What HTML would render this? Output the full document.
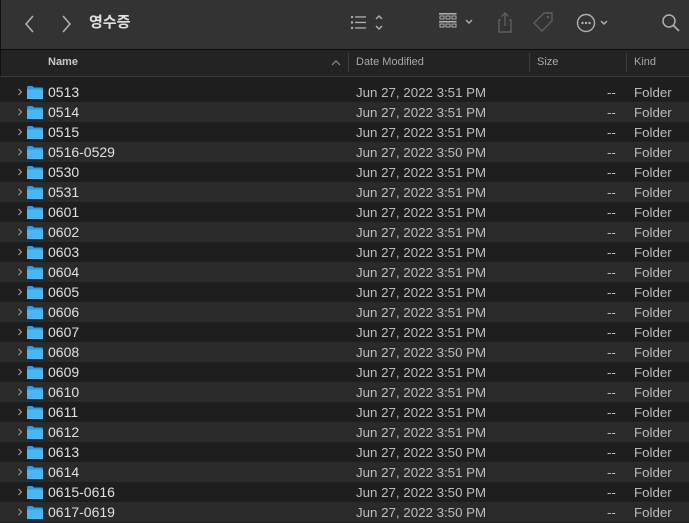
<!DOCTYPE html>
<html><head><meta charset="utf-8"><style>
*{margin:0;padding:0;box-sizing:border-box}
body{width:689px;height:523px;background:#1e1e1e;overflow:hidden;font-family:"Liberation Sans","Noto Sans CJK KR",sans-serif;position:relative}
.tb{position:absolute;left:0;top:0;width:689px;height:49px;background:#333333;border-left:1px solid #111}
.bl{position:absolute;left:0;top:49px;width:689px;height:1px;background:#0b0b0b}
.hd{position:absolute;left:0;top:50px;width:689px;height:26px;background:#232323;border-left:1px solid #111}
.hl{position:absolute;left:0;top:76px;width:689px;height:1px;background:#3a3a3a}
.ht{position:absolute;top:56px;font-size:11px;color:#a8a8a8}
.sep{position:absolute;top:53px;width:1px;height:19px;background:#3c3c3c}
.row{position:absolute;left:0;width:689px;height:20px;font-size:13.3px;color:#e0e0e0;transform:translateY(1px)}
.row.a{background:#2a2a2a}
.row span{position:absolute;top:3px}
.nm{left:48px;font-size:14px;top:2px!important}
.dt{left:356px;color:#bdbdbd}
.sz{left:607px;color:#bdbdbd}
.kd{left:634px;color:#bdbdbd}
.ch{position:absolute;left:16px;top:5px}
.fd{position:absolute;left:27px;top:4px}
</style></head><body>
<div class="tb">
<svg style="position:absolute;left:22px;top:14px" width="14" height="20"><path d="M10 2 L3 10 L10 18" fill="none" stroke="#b0b0b0" stroke-width="1.6"/></svg>
<svg style="position:absolute;left:58px;top:14px" width="14" height="20"><path d="M4 2 L11 10 L4 18" fill="none" stroke="#b0b0b0" stroke-width="1.6"/></svg>
<div style="position:absolute;left:88px;top:11px;font-size:15px;font-weight:bold;color:#e0e0e0">영수증</div>
<svg style="position:absolute;left:348px;top:13px" width="40" height="20"><g fill="#b0b0b0"><circle cx="3" cy="4" r="1.2"/><circle cx="3" cy="9.5" r="1.2"/><circle cx="3" cy="15" r="1.2"/><rect x="6" y="3.3" width="11" height="1.3"/><rect x="6" y="8.8" width="11" height="1.3"/><rect x="6" y="14.3" width="11" height="1.3"/></g><path d="M27 6 L30 3 L33 6 M27 13 L30 16 L33 13" fill="none" stroke="#b0b0b0" stroke-width="1.4"/></svg>
<svg style="position:absolute;left:438px;top:12px" width="40" height="22"><g fill="none" stroke="#b0b0b0" stroke-width="1"><rect x="0" y="1.5" width="17" height="0.5"/><rect x="1" y="4" width="4" height="3"/><rect x="7" y="4" width="4" height="3"/><rect x="13" y="4" width="4" height="3"/><rect x="0" y="9.5" width="17" height="0.5"/><rect x="1" y="12" width="4" height="3"/><rect x="7" y="12" width="4" height="3"/><rect x="13" y="12" width="4" height="3"/></g><path d="M27 8 L30 11 L33 8" fill="none" stroke="#b0b0b0" stroke-width="1.4"/></svg>
<svg style="position:absolute;left:494px;top:11px" width="20" height="24"><path d="M6 9 H4 V21 H16 V9 H14 M10 15 V2 M6.5 5.5 L10 2 L13.5 5.5" fill="none" stroke="#5e5e5e" stroke-width="1.4"/></svg>
<svg style="position:absolute;left:530px;top:11px" width="24" height="24"><path d="M13 2 H21 V10 L11 20 L3 12 Z" fill="none" stroke="#5e5e5e" stroke-width="1.4"/><circle cx="17" cy="6" r="1.3" fill="#5e5e5e"/></svg>
<svg style="position:absolute;left:575px;top:12px" width="36" height="22"><circle cx="10" cy="11" r="8.5" fill="none" stroke="#b0b0b0" stroke-width="1.4"/><g fill="#b0b0b0"><circle cx="6.5" cy="11" r="1.2"/><circle cx="10" cy="11" r="1.2"/><circle cx="13.5" cy="11" r="1.2"/></g><path d="M25 9 L28 12 L31 9" fill="none" stroke="#b0b0b0" stroke-width="1.4"/></svg>
<svg style="position:absolute;left:660px;top:13px" width="20" height="20"><circle cx="8" cy="8" r="6" fill="none" stroke="#b0b0b0" stroke-width="1.5"/><path d="M12.5 12.5 L18 18" stroke="#b0b0b0" stroke-width="1.6"/></svg>
</div>
<div class="bl"></div>
<div class="hd"></div>
<div class="hl"></div>
<div class="ht" style="left:48px;font-weight:bold;color:#c8c8c8">Name</div>
<svg style="position:absolute;left:331px;top:59px" width="10" height="8"><path d="M1 6 L5 2 L9 6" fill="none" stroke="#909090" stroke-width="1.2"/></svg>
<div class="sep" style="left:348px"></div><div class="ht" style="left:356px">Date Modified</div>
<div class="sep" style="left:529px"></div><div class="ht" style="left:537px">Size</div>
<div class="sep" style="left:626px"></div><div class="ht" style="left:634px">Kind</div>
<div class="row" style="top:81px"><svg class="ch" width="8" height="10"><path d="M2.5 2 L5.5 5 L2.5 8" fill="none" stroke="#9a9a9a" stroke-width="1.1"/></svg><svg class="fd" width="16" height="13"><path d="M0 1.5 Q0 0 1.5 0 H5.5 L7 1.5 H14.5 Q16 1.5 16 3 V13 H0 Z" fill="#2a9de8"/><rect x="0" y="3.5" width="16" height="9.5" rx="1" fill="#4ab6f5"/></svg><span class="nm">0513</span><span class="dt">Jun 27, 2022 3:51 PM</span><span class="sz">--</span><span class="kd">Folder</span></div>
<div class="row a" style="top:101px"><svg class="ch" width="8" height="10"><path d="M2.5 2 L5.5 5 L2.5 8" fill="none" stroke="#9a9a9a" stroke-width="1.1"/></svg><svg class="fd" width="16" height="13"><path d="M0 1.5 Q0 0 1.5 0 H5.5 L7 1.5 H14.5 Q16 1.5 16 3 V13 H0 Z" fill="#2a9de8"/><rect x="0" y="3.5" width="16" height="9.5" rx="1" fill="#4ab6f5"/></svg><span class="nm">0514</span><span class="dt">Jun 27, 2022 3:51 PM</span><span class="sz">--</span><span class="kd">Folder</span></div>
<div class="row" style="top:121px"><svg class="ch" width="8" height="10"><path d="M2.5 2 L5.5 5 L2.5 8" fill="none" stroke="#9a9a9a" stroke-width="1.1"/></svg><svg class="fd" width="16" height="13"><path d="M0 1.5 Q0 0 1.5 0 H5.5 L7 1.5 H14.5 Q16 1.5 16 3 V13 H0 Z" fill="#2a9de8"/><rect x="0" y="3.5" width="16" height="9.5" rx="1" fill="#4ab6f5"/></svg><span class="nm">0515</span><span class="dt">Jun 27, 2022 3:51 PM</span><span class="sz">--</span><span class="kd">Folder</span></div>
<div class="row a" style="top:141px"><svg class="ch" width="8" height="10"><path d="M2.5 2 L5.5 5 L2.5 8" fill="none" stroke="#9a9a9a" stroke-width="1.1"/></svg><svg class="fd" width="16" height="13"><path d="M0 1.5 Q0 0 1.5 0 H5.5 L7 1.5 H14.5 Q16 1.5 16 3 V13 H0 Z" fill="#2a9de8"/><rect x="0" y="3.5" width="16" height="9.5" rx="1" fill="#4ab6f5"/></svg><span class="nm">0516-0529</span><span class="dt">Jun 27, 2022 3:50 PM</span><span class="sz">--</span><span class="kd">Folder</span></div>
<div class="row" style="top:161px"><svg class="ch" width="8" height="10"><path d="M2.5 2 L5.5 5 L2.5 8" fill="none" stroke="#9a9a9a" stroke-width="1.1"/></svg><svg class="fd" width="16" height="13"><path d="M0 1.5 Q0 0 1.5 0 H5.5 L7 1.5 H14.5 Q16 1.5 16 3 V13 H0 Z" fill="#2a9de8"/><rect x="0" y="3.5" width="16" height="9.5" rx="1" fill="#4ab6f5"/></svg><span class="nm">0530</span><span class="dt">Jun 27, 2022 3:51 PM</span><span class="sz">--</span><span class="kd">Folder</span></div>
<div class="row a" style="top:181px"><svg class="ch" width="8" height="10"><path d="M2.5 2 L5.5 5 L2.5 8" fill="none" stroke="#9a9a9a" stroke-width="1.1"/></svg><svg class="fd" width="16" height="13"><path d="M0 1.5 Q0 0 1.5 0 H5.5 L7 1.5 H14.5 Q16 1.5 16 3 V13 H0 Z" fill="#2a9de8"/><rect x="0" y="3.5" width="16" height="9.5" rx="1" fill="#4ab6f5"/></svg><span class="nm">0531</span><span class="dt">Jun 27, 2022 3:51 PM</span><span class="sz">--</span><span class="kd">Folder</span></div>
<div class="row" style="top:201px"><svg class="ch" width="8" height="10"><path d="M2.5 2 L5.5 5 L2.5 8" fill="none" stroke="#9a9a9a" stroke-width="1.1"/></svg><svg class="fd" width="16" height="13"><path d="M0 1.5 Q0 0 1.5 0 H5.5 L7 1.5 H14.5 Q16 1.5 16 3 V13 H0 Z" fill="#2a9de8"/><rect x="0" y="3.5" width="16" height="9.5" rx="1" fill="#4ab6f5"/></svg><span class="nm">0601</span><span class="dt">Jun 27, 2022 3:51 PM</span><span class="sz">--</span><span class="kd">Folder</span></div>
<div class="row a" style="top:221px"><svg class="ch" width="8" height="10"><path d="M2.5 2 L5.5 5 L2.5 8" fill="none" stroke="#9a9a9a" stroke-width="1.1"/></svg><svg class="fd" width="16" height="13"><path d="M0 1.5 Q0 0 1.5 0 H5.5 L7 1.5 H14.5 Q16 1.5 16 3 V13 H0 Z" fill="#2a9de8"/><rect x="0" y="3.5" width="16" height="9.5" rx="1" fill="#4ab6f5"/></svg><span class="nm">0602</span><span class="dt">Jun 27, 2022 3:51 PM</span><span class="sz">--</span><span class="kd">Folder</span></div>
<div class="row" style="top:241px"><svg class="ch" width="8" height="10"><path d="M2.5 2 L5.5 5 L2.5 8" fill="none" stroke="#9a9a9a" stroke-width="1.1"/></svg><svg class="fd" width="16" height="13"><path d="M0 1.5 Q0 0 1.5 0 H5.5 L7 1.5 H14.5 Q16 1.5 16 3 V13 H0 Z" fill="#2a9de8"/><rect x="0" y="3.5" width="16" height="9.5" rx="1" fill="#4ab6f5"/></svg><span class="nm">0603</span><span class="dt">Jun 27, 2022 3:51 PM</span><span class="sz">--</span><span class="kd">Folder</span></div>
<div class="row a" style="top:261px"><svg class="ch" width="8" height="10"><path d="M2.5 2 L5.5 5 L2.5 8" fill="none" stroke="#9a9a9a" stroke-width="1.1"/></svg><svg class="fd" width="16" height="13"><path d="M0 1.5 Q0 0 1.5 0 H5.5 L7 1.5 H14.5 Q16 1.5 16 3 V13 H0 Z" fill="#2a9de8"/><rect x="0" y="3.5" width="16" height="9.5" rx="1" fill="#4ab6f5"/></svg><span class="nm">0604</span><span class="dt">Jun 27, 2022 3:51 PM</span><span class="sz">--</span><span class="kd">Folder</span></div>
<div class="row" style="top:281px"><svg class="ch" width="8" height="10"><path d="M2.5 2 L5.5 5 L2.5 8" fill="none" stroke="#9a9a9a" stroke-width="1.1"/></svg><svg class="fd" width="16" height="13"><path d="M0 1.5 Q0 0 1.5 0 H5.5 L7 1.5 H14.5 Q16 1.5 16 3 V13 H0 Z" fill="#2a9de8"/><rect x="0" y="3.5" width="16" height="9.5" rx="1" fill="#4ab6f5"/></svg><span class="nm">0605</span><span class="dt">Jun 27, 2022 3:51 PM</span><span class="sz">--</span><span class="kd">Folder</span></div>
<div class="row a" style="top:301px"><svg class="ch" width="8" height="10"><path d="M2.5 2 L5.5 5 L2.5 8" fill="none" stroke="#9a9a9a" stroke-width="1.1"/></svg><svg class="fd" width="16" height="13"><path d="M0 1.5 Q0 0 1.5 0 H5.5 L7 1.5 H14.5 Q16 1.5 16 3 V13 H0 Z" fill="#2a9de8"/><rect x="0" y="3.5" width="16" height="9.5" rx="1" fill="#4ab6f5"/></svg><span class="nm">0606</span><span class="dt">Jun 27, 2022 3:51 PM</span><span class="sz">--</span><span class="kd">Folder</span></div>
<div class="row" style="top:321px"><svg class="ch" width="8" height="10"><path d="M2.5 2 L5.5 5 L2.5 8" fill="none" stroke="#9a9a9a" stroke-width="1.1"/></svg><svg class="fd" width="16" height="13"><path d="M0 1.5 Q0 0 1.5 0 H5.5 L7 1.5 H14.5 Q16 1.5 16 3 V13 H0 Z" fill="#2a9de8"/><rect x="0" y="3.5" width="16" height="9.5" rx="1" fill="#4ab6f5"/></svg><span class="nm">0607</span><span class="dt">Jun 27, 2022 3:51 PM</span><span class="sz">--</span><span class="kd">Folder</span></div>
<div class="row a" style="top:341px"><svg class="ch" width="8" height="10"><path d="M2.5 2 L5.5 5 L2.5 8" fill="none" stroke="#9a9a9a" stroke-width="1.1"/></svg><svg class="fd" width="16" height="13"><path d="M0 1.5 Q0 0 1.5 0 H5.5 L7 1.5 H14.5 Q16 1.5 16 3 V13 H0 Z" fill="#2a9de8"/><rect x="0" y="3.5" width="16" height="9.5" rx="1" fill="#4ab6f5"/></svg><span class="nm">0608</span><span class="dt">Jun 27, 2022 3:50 PM</span><span class="sz">--</span><span class="kd">Folder</span></div>
<div class="row" style="top:361px"><svg class="ch" width="8" height="10"><path d="M2.5 2 L5.5 5 L2.5 8" fill="none" stroke="#9a9a9a" stroke-width="1.1"/></svg><svg class="fd" width="16" height="13"><path d="M0 1.5 Q0 0 1.5 0 H5.5 L7 1.5 H14.5 Q16 1.5 16 3 V13 H0 Z" fill="#2a9de8"/><rect x="0" y="3.5" width="16" height="9.5" rx="1" fill="#4ab6f5"/></svg><span class="nm">0609</span><span class="dt">Jun 27, 2022 3:51 PM</span><span class="sz">--</span><span class="kd">Folder</span></div>
<div class="row a" style="top:381px"><svg class="ch" width="8" height="10"><path d="M2.5 2 L5.5 5 L2.5 8" fill="none" stroke="#9a9a9a" stroke-width="1.1"/></svg><svg class="fd" width="16" height="13"><path d="M0 1.5 Q0 0 1.5 0 H5.5 L7 1.5 H14.5 Q16 1.5 16 3 V13 H0 Z" fill="#2a9de8"/><rect x="0" y="3.5" width="16" height="9.5" rx="1" fill="#4ab6f5"/></svg><span class="nm">0610</span><span class="dt">Jun 27, 2022 3:51 PM</span><span class="sz">--</span><span class="kd">Folder</span></div>
<div class="row" style="top:401px"><svg class="ch" width="8" height="10"><path d="M2.5 2 L5.5 5 L2.5 8" fill="none" stroke="#9a9a9a" stroke-width="1.1"/></svg><svg class="fd" width="16" height="13"><path d="M0 1.5 Q0 0 1.5 0 H5.5 L7 1.5 H14.5 Q16 1.5 16 3 V13 H0 Z" fill="#2a9de8"/><rect x="0" y="3.5" width="16" height="9.5" rx="1" fill="#4ab6f5"/></svg><span class="nm">0611</span><span class="dt">Jun 27, 2022 3:51 PM</span><span class="sz">--</span><span class="kd">Folder</span></div>
<div class="row a" style="top:421px"><svg class="ch" width="8" height="10"><path d="M2.5 2 L5.5 5 L2.5 8" fill="none" stroke="#9a9a9a" stroke-width="1.1"/></svg><svg class="fd" width="16" height="13"><path d="M0 1.5 Q0 0 1.5 0 H5.5 L7 1.5 H14.5 Q16 1.5 16 3 V13 H0 Z" fill="#2a9de8"/><rect x="0" y="3.5" width="16" height="9.5" rx="1" fill="#4ab6f5"/></svg><span class="nm">0612</span><span class="dt">Jun 27, 2022 3:51 PM</span><span class="sz">--</span><span class="kd">Folder</span></div>
<div class="row" style="top:441px"><svg class="ch" width="8" height="10"><path d="M2.5 2 L5.5 5 L2.5 8" fill="none" stroke="#9a9a9a" stroke-width="1.1"/></svg><svg class="fd" width="16" height="13"><path d="M0 1.5 Q0 0 1.5 0 H5.5 L7 1.5 H14.5 Q16 1.5 16 3 V13 H0 Z" fill="#2a9de8"/><rect x="0" y="3.5" width="16" height="9.5" rx="1" fill="#4ab6f5"/></svg><span class="nm">0613</span><span class="dt">Jun 27, 2022 3:50 PM</span><span class="sz">--</span><span class="kd">Folder</span></div>
<div class="row a" style="top:461px"><svg class="ch" width="8" height="10"><path d="M2.5 2 L5.5 5 L2.5 8" fill="none" stroke="#9a9a9a" stroke-width="1.1"/></svg><svg class="fd" width="16" height="13"><path d="M0 1.5 Q0 0 1.5 0 H5.5 L7 1.5 H14.5 Q16 1.5 16 3 V13 H0 Z" fill="#2a9de8"/><rect x="0" y="3.5" width="16" height="9.5" rx="1" fill="#4ab6f5"/></svg><span class="nm">0614</span><span class="dt">Jun 27, 2022 3:51 PM</span><span class="sz">--</span><span class="kd">Folder</span></div>
<div class="row" style="top:481px"><svg class="ch" width="8" height="10"><path d="M2.5 2 L5.5 5 L2.5 8" fill="none" stroke="#9a9a9a" stroke-width="1.1"/></svg><svg class="fd" width="16" height="13"><path d="M0 1.5 Q0 0 1.5 0 H5.5 L7 1.5 H14.5 Q16 1.5 16 3 V13 H0 Z" fill="#2a9de8"/><rect x="0" y="3.5" width="16" height="9.5" rx="1" fill="#4ab6f5"/></svg><span class="nm">0615-0616</span><span class="dt">Jun 27, 2022 3:50 PM</span><span class="sz">--</span><span class="kd">Folder</span></div>
<div class="row a" style="top:501px"><svg class="ch" width="8" height="10"><path d="M2.5 2 L5.5 5 L2.5 8" fill="none" stroke="#9a9a9a" stroke-width="1.1"/></svg><svg class="fd" width="16" height="13"><path d="M0 1.5 Q0 0 1.5 0 H5.5 L7 1.5 H14.5 Q16 1.5 16 3 V13 H0 Z" fill="#2a9de8"/><rect x="0" y="3.5" width="16" height="9.5" rx="1" fill="#4ab6f5"/></svg><span class="nm">0617-0619</span><span class="dt">Jun 27, 2022 3:50 PM</span><span class="sz">--</span><span class="kd">Folder</span></div>
</body></html>
